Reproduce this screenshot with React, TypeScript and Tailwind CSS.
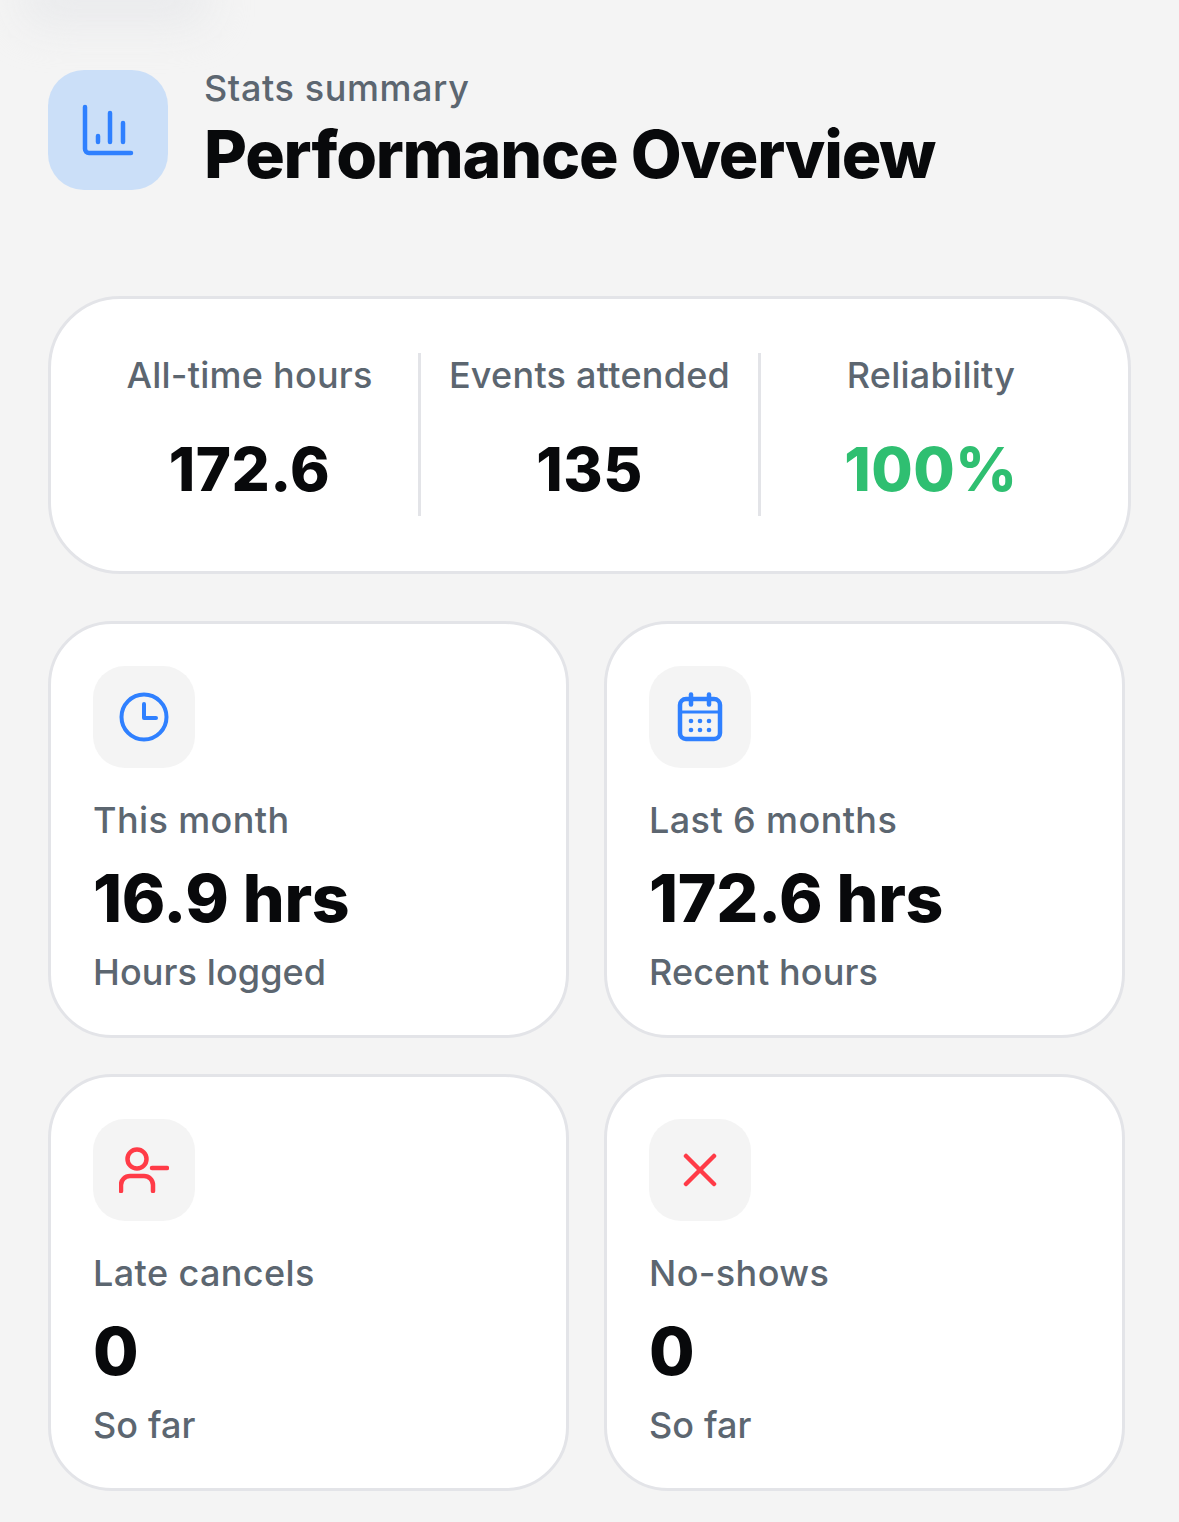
const inter = "font-['Inter','Noto_Sans',sans-serif]";

function ChartIcon() {
    return (
        <svg width="52" height="52" viewBox="0 0 52 52" fill="none" stroke="#2f80ff" strokeWidth="4.5" strokeLinecap="round" strokeLinejoin="round">
            <path d="M3 3v42a4 4 0 0 0 4 4h42" />
            <path d="M16 32v6" />
            <path d="M28 9v29" />
            <path d="M41 19v19" />
        </svg>
    );
}

function ClockIcon() {
    return (
        <svg width="50" height="50" viewBox="0 0 50 50" fill="none" stroke="#2f80ff" strokeWidth="4" strokeLinecap="round" strokeLinejoin="round">
            <circle cx="25" cy="25" r="22.5" />
            <path d="M25 12v14h12" />
        </svg>
    );
}

function CalendarIcon() {
    return (
        <svg width="46" height="50" viewBox="0 0 46 50" fill="none" stroke="#2f80ff" strokeWidth="4.5" strokeLinecap="round" strokeLinejoin="round">
            <rect x="3" y="7" width="40" height="40" rx="6" />
            <path d="M14 2.5v10" />
            <path d="M32 2.5v10" />
            <path d="M3 20h40" strokeWidth="3" />
            <g fill="#2f80ff" stroke="none">
                <circle cx="14" cy="29" r="2.3" />
                <circle cx="23" cy="29" r="2.3" />
                <circle cx="32" cy="29" r="2.3" />
                <circle cx="14" cy="38" r="2.3" />
                <circle cx="23" cy="38" r="2.3" />
                <circle cx="32" cy="38" r="2.3" />
            </g>
        </svg>
    );
}

function UserMinusIcon() {
    return (
        <svg width="50" height="46" viewBox="0 0 50 46" fill="none" stroke="#ff3b47" strokeWidth="4.5" strokeLinecap="round" strokeLinejoin="round">
            <circle cx="18" cy="12" r="9.5" />
            <path d="M2 44v-6a9 9 0 0 1 9-9h14a9 9 0 0 1 9 9v6" />
            <path d="M33 21h15" />
        </svg>
    );
}

function XIcon() {
    return (
        <svg width="34" height="34" viewBox="0 0 34 34" fill="none" stroke="#ff3b47" strokeWidth="4.5" strokeLinecap="round">
            <path d="M3 3l28 28" />
            <path d="M31 3L3 31" />
        </svg>
    );
}

function Summary({ label, value, green, divider }: { label: string; value: string; green?: boolean; divider?: boolean }) {
    return (
        <div className={`w-[340px] h-[163px] flex flex-col items-center ${divider ? 'border-r-[3px] border-[#e3e4e8]' : ''}`}>
            <p className="text-[36px] leading-[44px] font-medium tracking-[0.25px] text-[#5c6670]">{label}</p>
            <p className={`mt-[36px] text-[60px] leading-[72px] font-[850] tracking-[0.5px] ${green ? 'text-[#2fbf71]' : 'text-[#08090b]'}`}>{value}</p>
        </div>
    );
}

function StatCard({ icon, label, value, note }: { icon: React.ReactNode; label: string; value: string; note: string }) {
    return (
        <div className="h-[417px] bg-white border-[3px] border-[#e3e4e8] rounded-[64px] pt-[42px] pl-[42px]">
            <div className="w-[102px] h-[102px] rounded-[32px] bg-[#f4f4f4] flex items-center justify-center">{icon}</div>
            <p className="mt-[30px] text-[36px] leading-[44px] font-medium tracking-[0.4px] text-[#5c6670]">{label}</p>
            <p className="mt-[16px] text-[66px] leading-[80px] font-[850] tracking-[-0.3px] text-[#08090b]">{value}</p>
            <p className="mt-[12px] text-[36px] leading-[44px] font-medium tracking-[0.1px] text-[#5c6670]">{note}</p>
        </div>
    );
}

export default function App() {
    return (
        <div className={`${inter} relative w-[1179px] h-[1522px] overflow-hidden bg-[#f4f4f4] pl-[48px] pt-[70px]`}>
            <div className="absolute left-[20px] top-[-25px] w-[190px] h-[50px] rounded-full bg-[#e9eaec] blur-[20px]" />
            <div className="relative h-[120px] flex items-start gap-[36px]">
                <div className="w-[120px] h-[120px] rounded-[36px] bg-[#cbdff8] flex items-center justify-center"><ChartIcon /></div>
                <div>
                    <p className="text-[36px] leading-[36px] font-medium tracking-[0.6px] text-[#5c6670]">Stats summary</p>
                    <h1 className="mt-[4px] text-[66px] leading-[88px] font-extrabold tracking-[-1.2px] text-[#08090b]">Performance Overview</h1>
                </div>
            </div>
            <div className="mt-[106px] w-[1083px] h-[278px] bg-white border-[3px] border-[#e3e4e8] rounded-[72px] pt-[54px] pl-[30px] flex">
                <Summary label="All-time hours" value="172.6" divider />
                <Summary label="Events attended" value="135" divider />
                <Summary label="Reliability" value="100%" green />
            </div>
            <div className="mt-[47px] w-[1077px] grid grid-cols-[521px_521px] gap-x-[35px] gap-y-[36px]">
                <StatCard icon={<ClockIcon />} label="This month" value="16.9 hrs" note="Hours logged" />
                <StatCard icon={<CalendarIcon />} label="Last 6 months" value="172.6 hrs" note="Recent hours" />
                <StatCard icon={<UserMinusIcon />} label="Late cancels" value="0" note="So far" />
                <StatCard icon={<XIcon />} label="No-shows" value="0" note="So far" />
            </div>
        </div>
    );
}
